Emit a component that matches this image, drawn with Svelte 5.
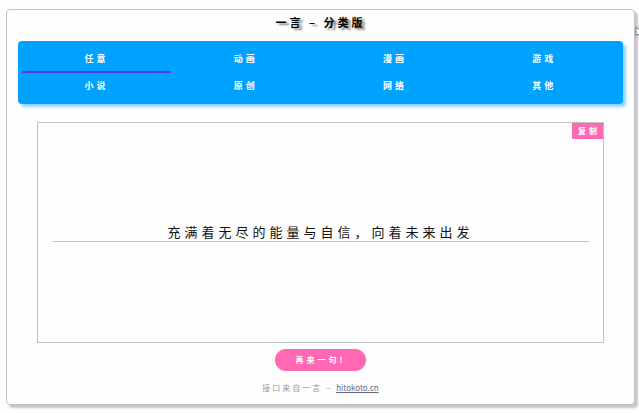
<script lang="ts">
  const categories = ['任意', '动画', '漫画', '游戏', '小说', '原创', '网络', '其他'];
  const quotes = ['充满着无尽的能量与自信，向着未来出发'];

  let active = $state('任意');
  let index = $state(0);

  function next() {
    index = (index + 1) % quotes.length;
  }

  function copy() {
    navigator.clipboard?.writeText(quotes[index]);
  }
</script>

<main class="card">
  <h1>一言 – 分类版</h1>

  <nav class="categories">
    {#each categories as name}
      <button class="category" class:active={active === name} onclick={() => (active = name)}>
        {name}
      </button>
    {/each}
  </nav>

  <section class="panel">
    <button class="copy" onclick={copy}>复制</button>
    <p class="quote">{quotes[index]}</p>
  </section>

  <button class="next" onclick={next}>再来一句!</button>

  <footer>接口来自一言 – <a href="https://hitokoto.cn">hitokoto.cn</a></footer>
</main>

<svg class="pointer" viewBox="0 0 8 12" width="8" height="12" aria-hidden="true">
  <path d="M1 1v9l2-2 2 3 1-1-1-3h3z" fill="#fff" stroke="#777" />
</svg>

<style>
  :global(body) {
    background: #fefefe;
    font-family: "Noto Sans CJK SC", sans-serif;
    overflow: hidden;
  }

  .card {
    display: flex;
    flex-direction: column;
    align-items: center;
    margin: 9px 4px 8px 6px;
    padding: 0 11px 9px;
    border: 1px solid #bfc1c4;
    border-radius: 4px;
    background: #fefefe;
    box-shadow: 3px 3px 2px #c8c6cc;
  }

  h1 {
    margin: 3px 0 10px;
    font-size: 11px;
    line-height: 18px;
    font-weight: 700;
    letter-spacing: 3px;
    color: #000;
    text-shadow: 3px 2px 2px #777;
  }

  button {
    margin: 0;
    padding: 0;
    border: none;
    font-family: inherit;
    font-weight: 700;
    color: #fff;
    cursor: pointer;
  }

  .categories {
    display: grid;
    grid-template-columns: repeat(4, 1fr);
    align-self: stretch;
    padding: 5px 4px 4px;
    border-radius: 4px;
    background: #00a2ff;
    box-shadow: 3px 3px 3px #8fd4ff;
  }

  .category {
    padding: 6px 0 5px;
    border-bottom: 2px solid transparent;
    background: none;
    font-size: 9px;
    line-height: 14px;
    letter-spacing: 3px;
  }

  .category.active {
    border-bottom-color: #5b35f5;
  }

  .panel {
    position: relative;
    display: flex;
    flex-direction: column;
    justify-content: center;
    box-sizing: border-box;
    width: calc(100% - 38px);
    min-height: 221px;
    margin-top: 18px;
    padding: 0 14px;
    border: 1px solid #bdc1c1;
  }

  .copy {
    position: absolute;
    top: 0;
    right: 0;
    padding: 0 3px 0 6px;
    background: #ff69b4;
    font-size: 8px;
    line-height: 16px;
    letter-spacing: 3px;
  }

  .quote {
    margin: 0;
    border-bottom: 1px solid #c4c4c4;
    font-size: 13px;
    line-height: 18px;
    letter-spacing: 4px;
    text-align: center;
    color: #111;
  }

  .next {
    margin-top: 6px;
    padding: 0 21px;
    border-radius: 11px;
    background: #ff69b4;
    font-size: 8px;
    line-height: 22px;
    letter-spacing: 3px;
  }

  footer {
    margin-top: 10px;
    font-size: 8px;
    line-height: 14px;
    letter-spacing: 2px;
    color: #999;
  }

  a {
    letter-spacing: normal;
    color: #666680;
  }

  .pointer {
    position: absolute;
    top: 26px;
    right: -4px;
  }
</style>
